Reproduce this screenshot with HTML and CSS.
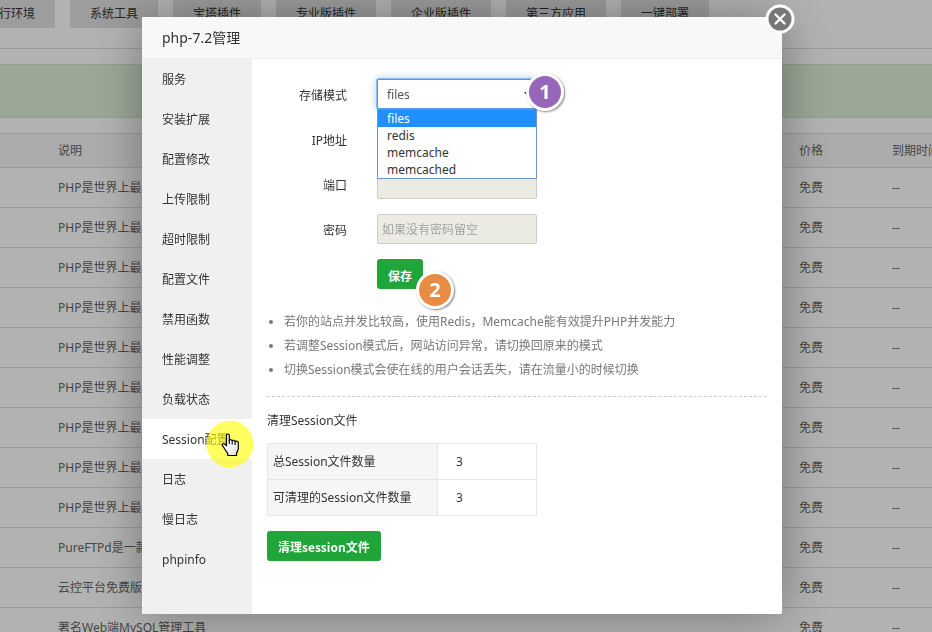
FILE: index.html
```html
<!DOCTYPE html>
<html lang="zh-CN">
<head>
<meta charset="utf-8">
<title>php-7.2管理</title>
<link rel="stylesheet" href="styles.css">
</head>
<body>
<main class="page">
  <nav class="tabs">
    <button type="button">运行环境</button>
    <button type="button">系统工具</button>
    <button type="button">宝塔插件</button>
    <button type="button">专业版插件</button>
    <button type="button">企业版插件</button>
    <button type="button">第三方应用</button>
    <button type="button">一键部署</button>
  </nav>
  <div class="notice"></div>
  <table class="soft">
    <colgroup><col class="c-desc"><col class="c-price"><col class="c-end"></colgroup>
    <thead><tr><th>说明</th><th>价格</th><th>到期时间</th></tr></thead>
    <tbody>
      <tr><td>PHP是世界上最</td><td>免费</td><td>--</td></tr>
      <tr><td>PHP是世界上最</td><td>免费</td><td>--</td></tr>
      <tr><td>PHP是世界上最</td><td>免费</td><td>--</td></tr>
      <tr><td>PHP是世界上最</td><td>免费</td><td>--</td></tr>
      <tr><td>PHP是世界上最</td><td>免费</td><td>--</td></tr>
      <tr><td>PHP是世界上最</td><td>免费</td><td>--</td></tr>
      <tr><td>PHP是世界上最</td><td>免费</td><td>--</td></tr>
      <tr><td>PHP是世界上最</td><td>免费</td><td>--</td></tr>
      <tr><td>PHP是世界上最</td><td>免费</td><td>--</td></tr>
      <tr><td>PureFTPd是一款</td><td>免费</td><td>--</td></tr>
      <tr><td>云控平台免费版</td><td>免费</td><td>--</td></tr>
      <tr><td>著名Web端MySQL管理工具</td><td>免费</td><td>--</td></tr>
    </tbody>
  </table>
</main>

<div class="overlay">
  <section class="modal" role="dialog" aria-labelledby="dlg-title">
    <h1 id="dlg-title" class="modal-title">php-7.2管理</h1>
    <button type="button" class="close" aria-label="关闭">
      <svg viewBox="0 0 30 30" width="30" height="30"><circle cx="15" cy="15" r="13" fill="#777" stroke="#fff" stroke-width="3"/><path d="M10.500 10.500l9 9M19.500 10.500l-9 9" stroke="#fff" stroke-width="2.400" stroke-linecap="round"/></svg>
    </button>
    <div class="modal-body">
      <nav class="side">
        <a href="#">服务</a>
        <a href="#">安装扩展</a>
        <a href="#">配置修改</a>
        <a href="#">上传限制</a>
        <a href="#">超时限制</a>
        <a href="#">配置文件</a>
        <a href="#">禁用函数</a>
        <a href="#">性能调整</a>
        <a href="#">负载状态</a>
        <a href="#" class="active">Session配置
          <svg class="pointer" viewBox="0 0 48 48" width="48" height="48" aria-hidden="true">
            <defs><linearGradient id="hand" x1="0" y1="0" x2="1" y2="1"><stop offset=".4" stop-color="#fff"/><stop offset="1" stop-color="#ddd"/></linearGradient></defs>
            <circle cx="24" cy="24" r="23.500" fill="#ffff00" fill-opacity=".62"/>
            <path d="M20.500 15.500c0-2 2.800-2 2.800 0v5c.5-1.200 2.900-1 2.900.4.700-1.100 2.900-.7 2.900.7.900-.8 3.200-.4 3.200 1.200v5.500c0 2.500-1.800 3.500-1.800 5.700v1.500H21.800V34c0-1.500-1.800-2.500-2.700-4.500l-2.600-3.800c-.9-1.700 1.200-2.800 2.400-1.500l1.600 1.600z" fill="url(#hand)" stroke="#000" stroke-width="1.200" stroke-linejoin="round"/>
            <path d="M23.300 20v4M26.200 21v3.500M29.100 22v3" fill="none" stroke="#000" stroke-width="1.100"/>
          </svg>
        </a>
        <a href="#">日志</a>
        <a href="#">慢日志</a>
        <a href="#">phpinfo</a>
      </nav>
      <div class="content">
        <form class="form">
          <label for="mode">存储模式</label>
          <div class="field">
            <select id="mode"><option>files</option><option>redis</option><option>memcache</option><option>memcached</option></select>
            <svg class="arrow" viewBox="0 0 8 5" width="8" height="5" aria-hidden="true"><path d="M0 0h8L4 5z" fill="#444"/></svg>
            <ul class="menu">
              <li class="selected">files</li><li>redis</li><li>memcache</li><li>memcached</li>
            </ul>
            <span class="badge badge-one">1</span>
          </div>
          <label for="ip">IP地址</label>
          <input id="ip" type="text" disabled>
          <label for="port">端口</label>
          <input id="port" type="text" disabled>
          <label for="pass">密码</label>
          <input id="pass" type="text" placeholder="如果没有密码留空" disabled>
          <div class="field submit">
            <button type="button" class="btn">保存</button>
            <span class="badge badge-two">2</span>
          </div>
        </form>
        <ul class="tips">
          <li>若你的站点并发比较高，使用Redis，Memcache能有效提升PHP并发能力</li>
          <li>若调整Session模式后，网站访问异常，请切换回原来的模式</li>
          <li>切换Session模式会使在线的用户会话丢失，请在流量小的时候切换</li>
        </ul>
        <h2 class="subtitle">清理Session文件</h2>
        <table class="counts">
          <tr><th>总Session文件数量</th><td>3</td></tr>
          <tr><th>可清理的Session文件数量</th><td>3</td></tr>
        </table>
        <button type="button" class="btn">清理session文件</button>
      </div>
    </div>
  </section>
</div>
</body>
</html>
```

FILE: styles.css
```css
* { box-sizing: border-box; }
html, body { height: 100%; }
body {
  margin: 0;
  overflow: hidden;
  background: #fff;
  color: #333;
  font: 12px/20px "Noto Sans", "Noto Sans CJK SC", sans-serif;
}
button, input, select { font: inherit; color: inherit; }

.page { height: 100%; overflow: hidden; color: #666; }
.tabs {
  display: flex;
  gap: 15px;
  height: 49px;
  padding-bottom: 20px;
  margin-left: -33px;
  border-bottom: 1px solid #ddd;
}
.tabs button {
  flex: none;
  padding: 0 20px;
  border: 0;
  background: #e1e1e1;
  color: #333;
}
.notice {
  height: 54px;
  margin: 15px 0;
  background: #dff0d8;
  border: solid #d0e6c4;
  border-width: 1px 0;
}
.soft { width: 100%; table-layout: fixed; border-collapse: collapse; }
.c-desc { width: 791px; }
.c-price { width: 93px; }
.soft th, .soft td {
  height: 40px;
  padding: 0 0 0 8px;
  border-bottom: 1px solid #ddd;
  text-align: left;
  font-weight: 400;
  white-space: nowrap;
  overflow: hidden;
}
.soft th { height: 34px; background: #f6f6f6; border-top: 1px solid #ddd; }
.soft tr > :first-child { padding-left: 58px; }

.overlay {
  position: fixed;
  inset: 0;
  display: flex;
  justify-content: center;
  align-items: flex-start;
  padding: 17px 8px 0 0;
  background: rgba(0, 0, 0, .3);
}
.modal {
  position: relative;
  width: 640px;
  border-radius: 2px;
  background: #fff;
  box-shadow: 1px 1px 50px rgba(0, 0, 0, .35);
}
.modal-title {
  margin: 0;
  padding: 0 20px;
  border-bottom: 1px solid #eee;
  background: #f8f8f8;
  font-size: 14px;
  font-weight: 400;
  line-height: 41px;
}
.close {
  position: absolute;
  top: -13px;
  right: -13px;
  padding: 0;
  border: 0;
  background: none;
}
.close svg { display: block; }
.modal-body { display: flex; }
.side { width: 110px; padding-bottom: 35px; background: #f0f0f0; }
.side a {
  display: block;
  position: relative;
  height: 40px;
  padding-left: 20px;
  line-height: 42px;
  color: #333;
  text-decoration: none;
}
.side .active { background: #fff; }
.pointer { position: absolute; left: 64px; top: 1px; z-index: 1; }

.content { flex: 1; padding: 20px 15px; }
.form {
  display: grid;
  grid-template-columns: 80px 160px;
  gap: 15px 30px;
  line-height: 30px;
}
.form label { height: 30px; line-height: 34px; text-align: right; }
.field { position: relative; }
.submit { grid-column: 2; }
.form input, .form select {
  width: 100%;
  height: 30px;
  padding: 2px 4px 0;
  border: 1px solid #ccc;
  border-radius: 2px;
  background: #ebebe4;
}
.form input::placeholder { color: #a3a3a0; }
.form select {
  display: block;
  appearance: none;
  padding: 0 9px;
  border-color: #5897e8;
  background: #fff;
  color: #555;
  box-shadow: 0 0 0 1px #8fbcf0, 0 0 8px rgba(102, 175, 233, .7);
}
.arrow { position: absolute; top: 13px; right: 5px; }
.menu {
  position: absolute;
  top: 30px;
  left: 0;
  right: 0;
  z-index: 1;
  margin: 0;
  padding: 0;
  border: 1px solid #7094c8;
  background: #fff;
  list-style: none;
  line-height: 17px;
}
.menu li { padding-left: 9px; }
.menu .selected { background: #1e90ff; color: #fff; }
.badge {
  position: absolute;
  z-index: 2;
  width: 38px;
  height: 38px;
  border: 3px solid #fff;
  border-radius: 50%;
  color: #fff;
  font: bold 20px/31px "Open Sans", sans-serif;
  text-align: center;
  box-shadow: 1px 1px 2px rgba(0, 0, 0, .5);
}
.badge-one { top: -6px; left: 149px; background: #9866b8; }
.badge-two { top: 12px; left: 39px; background: #e78c42; }
.btn {
  display: block;
  height: 30px;
  padding: 2px 11px 0;
  border: 0;
  border-radius: 3px;
  background: #20a53a;
  color: #fff;
  font-family: "Noto Sans CJK SC", sans-serif;
  font-weight: 700;
}
.tips {
  margin: 21px 0 14px;
  padding: 0 0 0 17px;
  color: #777;
  line-height: 24px;
}
.subtitle {
  margin: 0;
  padding: 14px 0 12px;
  border-top: 1px dashed #ccc;
  font-size: 12px;
  font-weight: 400;
}
.counts { width: 270px; margin-bottom: 15px; border-collapse: collapse; }
.counts th, .counts td {
  height: 36px;
  padding: 0 5px;
  border: 1px solid #e6e6e6;
  text-align: left;
  font-weight: 400;
}
.counts th { width: 170px; background: #f6f6f6; }
.counts td { padding-left: 18px; }
```
